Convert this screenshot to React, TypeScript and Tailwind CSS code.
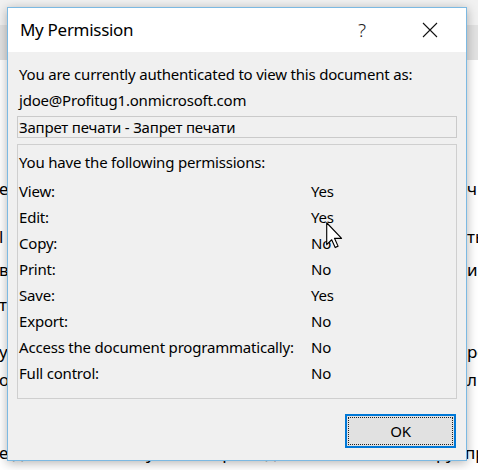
import React from 'react';

const perms: [string, string][] = [
  ['View:', 'Yes'],
  ['Edit:', 'Yes'],
  ['Copy:', 'No'],
  ['Print:', 'No'],
  ['Save:', 'Yes'],
  ['Export:', 'No'],
  ['Access the document programmatically:', 'No'],
  ['Full control:', 'No'],
];

// fragments of the document behind the dialog (left edge / right edge)
const DocLine: React.FC<{ left: string; right: string; className: string }> = ({ left, right, className }) => (
  <div className={`flex h-[26px] items-center ${className}`}>
    <span className="-ml-[1px] w-[8px] overflow-hidden whitespace-nowrap">{left}</span>
    <span className="ml-auto w-[11px] whitespace-nowrap">{right}</span>
  </div>
);

const Cursor = () => (
  <svg width="17" height="27" viewBox="0 0 12 19" className="absolute left-[326px] top-[222px]">
    <path d="M0.5 0.5 V16 L4 12.5 L6.5 18 L8.5 17 L6 11.5 H11 Z" fill="white" stroke="black" strokeWidth="0.8" strokeLinejoin="round" />
  </svg>
);

export default function App() {
  return (
    <div className="relative h-[470px] w-[478px] overflow-hidden bg-white font-['Noto_Sans',sans-serif] text-black">
      {/* document behind */}
      <div className="h-[25px] bg-[#f1f1f1]" />
      <div className="h-[35px] bg-[#e2e2e2]" />
      <div className="text-[17px]">
        <DocLine left="е" right="ч" className="mt-[116px]" />
        <DocLine left="l" right="ть" className="mt-[22px]" />
        <DocLine left="в" right="и," className="mt-[7px]" />
        <DocLine left="т" right="" className="mt-[9px]" />
        <DocLine left="у," right="ре" className="mt-[21px]" />
        <DocLine left="о" right="л" className="mt-[2px]" />
        <div className="mt-[47px] flex h-[26px] items-center whitespace-nowrap">
          <span className="-ml-[1px]">е дополнительно указать права для пользователей группр</span>
        </div>
      </div>

      {/* dialog window */}
      <div className="absolute left-[7px] top-[7px] flex h-[454px] w-[460px] flex-col border border-[#7cb9e2] bg-[#f0f0f0] shadow-[0_2px_10px_rgba(0,0,0,0.3)]">
        <div className="flex h-[44px] items-center bg-white pl-[12px] pr-[28px]">
          <span className="text-[17px] tracking-[-0.3px]">My Permission</span>
          <span className="ml-auto mr-[56px] text-[19px] font-light leading-none text-[#222]">?</span>
          <svg width="16" height="16" viewBox="0 0 16 16">
            <path d="M1 1 L15 15 M15 1 L1 15" stroke="#111" strokeWidth="1.1" />
          </svg>
        </div>

        <div className="flex flex-1 flex-col px-[9px] pt-[9px] text-[15px] leading-[26px] tracking-[-0.2px]">
          <div className="pl-[2px]">You are currently authenticated to view this document as:</div>
          <div className="pl-[2px]">jdoe@Profitug1.onmicrosoft.com</div>
          <div className="mt-[3px] border border-[#cacaca] pl-[1px] leading-[20px]">Запрет печати - Запрет печати</div>

          <div className="mt-[6px] border border-[#cfcfcf] px-[1px] pb-[12px] pt-[4px]">
            <div className="mb-[3px]">You have the following permissions:</div>
            <div className="grid grid-cols-[292px_1fr]">
              {perms.map(([label, value]) => (
                <React.Fragment key={label}>
                  <div>{label}</div>
                  <div>{value}</div>
                </React.Fragment>
              ))}
            </div>
          </div>

          <div className="mt-[15px] flex justify-end pr-[1px]">
            <button className="flex h-[34px] w-[111px] items-center justify-center border-2 border-[#0078d7] bg-[#e1e1e1] p-[1px]">
              <span className="flex h-full w-full items-center justify-center border border-dotted border-[#222] text-[15px]">OK</span>
            </button>
          </div>
        </div>
      </div>

      <Cursor />
    </div>
  );
}
